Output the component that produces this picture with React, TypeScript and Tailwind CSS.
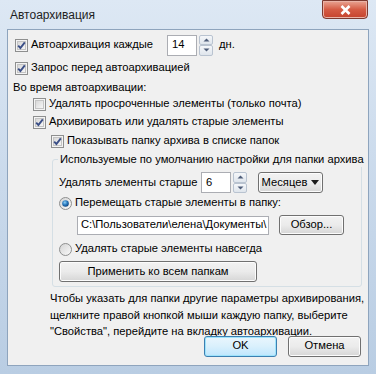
import React from "react";

const Check = ({ checked }: { checked: boolean }) => (
  <svg width="13" height="13" viewBox="0 0 13 13" className="shrink-0">
    <defs>
      <linearGradient id="cbg" x1="0" y1="0" x2="1" y2="1">
        <stop offset="0" stopColor="#d6d6d6" />
        <stop offset="1" stopColor="#f8f8f8" />
      </linearGradient>
    </defs>
    <rect x="0.5" y="0.5" width="12" height="12" fill="#f4f4f4" stroke="#8e8f8f" />
    <rect x="2.5" y="2.5" width="8" height="8" fill="url(#cbg)" stroke="#c4c4c4" />
    {checked && (
      <path d="M3.2 6.6 L5.4 9 L9.8 3.3" fill="none" stroke="#3b4f87" strokeWidth="1.9" />
    )}
  </svg>
);

const Radio = ({ checked }: { checked: boolean }) => (
  <svg width="13" height="13" viewBox="0 0 13 13" className="shrink-0">
    <defs>
      <linearGradient id="rbg" x1="0" y1="0" x2="1" y2="1">
        <stop offset="0" stopColor="#d2d2d2" />
        <stop offset="1" stopColor="#fbfbfb" />
      </linearGradient>
      <radialGradient id="rdot" cx="0.4" cy="0.35" r="0.7">
        <stop offset="0" stopColor="#8fd0f5" />
        <stop offset="0.5" stopColor="#2a7bc0" />
        <stop offset="1" stopColor="#0d3f78" />
      </radialGradient>
    </defs>
    <circle cx="6.5" cy="6.5" r="6" fill="url(#rbg)" stroke="#8e8f8f" />
    {checked && <circle cx="6.5" cy="6.5" r="3.3" fill="url(#rdot)" />}
  </svg>
);

const Spin = () => (
  <div className="flex flex-col w-[14px] h-[21px] ml-[2px]">
    {[0, 1].map((i) => (
      <div
        key={i}
        className="flex-1 flex items-center justify-center border border-[#b9c3d0] rounded-[2px] bg-gradient-to-b from-[#f5f7fa] to-[#dfe5ec]"
      >
        <svg width="7" height="4" viewBox="0 0 7 4">
          {i === 0 ? (
            <path d="M0.5 3.5 L3.5 0.5 L6.5 3.5 Z" fill="#4e5d79" />
          ) : (
            <path d="M0.5 0.5 L3.5 3.5 L6.5 0.5 Z" fill="#4e5d79" />
          )}
        </svg>
      </div>
    ))}
  </div>
);

const Btn = ({ children, className = "" }: { children: React.ReactNode; className?: string }) => (
  <div
    className={
      "flex items-center justify-center border border-[#707070] rounded-[3px] bg-gradient-to-b from-[#f2f2f2] via-[#ebebeb] to-[#d6d6d6] shadow-[inset_0_0_0_1px_#fcfcfc] " +
      className
    }
  >
    {children}
  </div>
);

export default function App() {
  return (
    <div
      className="w-[376px] h-[374px] relative overflow-hidden bg-gradient-to-b from-[#dde8f4] via-[#c9d9eb] to-[#b9cde3] text-[11.2px] leading-none text-black whitespace-nowrap"
      style={{ fontFamily: '"Liberation Sans", Arial, sans-serif' }}
    >
      {/* Title bar */}
      <div className="h-[29px] flex items-center pl-[10px] text-[12px] text-[#1e1e1e]">Автоархивация</div>
      <div className="absolute top-0 right-[8px] w-[46px] h-[19px] rounded-b-[4px] border border-[#7d3a30] bg-gradient-to-b from-[#e8a493] via-[#d55b44] to-[#c5432d] flex items-center justify-center shadow-[inset_0_0_0_1px_#eab3a6]">
        <svg width="11" height="10" viewBox="0 0 11 10">
          <path d="M1.5 1 L9.5 9 M9.5 1 L1.5 9" stroke="#ffffff" strokeWidth="2.6" />
        </svg>
      </div>

      {/* Content */}
      <div className="absolute left-[7px] top-[29px] w-[362px] h-[337px] border border-[#8ea4bd] bg-[#f0f0f0]">
        <div className="pl-[7px] pt-[4px]">
          {/* Row 1 */}
          <div className="h-[22px] flex items-center">
            <Check checked />
            <span className="ml-[3px] w-[136px]">Автоархивация каждые</span>
            <div className="w-[30px] h-[21px] border border-[#abadb3] bg-white flex items-center pl-[4px]">14</div>
            <Spin />
            <span className="ml-[6px]">дн.</span>
          </div>
          <div className="h-[16px] mt-[4px] flex items-center">
            <Check checked />
            <span className="ml-[3px]">Запрос перед автоархивацией</span>
          </div>
          <div className="h-[16px] mt-[4px] flex items-center -ml-[2px]">Во время автоархивации:</div>
          <div className="h-[16px] flex items-center pl-[18px]">
            <Check checked={false} />
            <span className="ml-[3px]">Удалять просроченные элементы (только почта)</span>
          </div>
          <div className="h-[16px] mt-[2px] flex items-center pl-[18px]">
            <Check checked />
            <span className="ml-[3px]">Архивировать или удалять старые элементы</span>
          </div>
          <div className="h-[16px] mt-[3px] flex items-center pl-[36px]">
            <Check checked />
            <span className="ml-[3px]">Показывать папку архива в списке папок</span>
          </div>
        </div>

        {/* Group box */}
        <div className="relative ml-[44px] mt-[10px] w-[310px] h-[128px] border border-[#d5dfe5] rounded-[3px]">
          <div className="absolute -top-[7px] left-[5px] px-[2px] bg-[#f0f0f0] h-[14px] flex items-center">
            Используемые по умолчанию настройки для папки архива
          </div>
          <div className="pl-[6px] pt-[12px]">
            <div className="h-[21px] flex items-center">
              <span className="w-[142px]">Удалять элементы старше</span>
              <div className="w-[30px] h-[21px] border border-[#abadb3] bg-white flex items-center pl-[4px]">6</div>
              <Spin />
              <Btn className="ml-[11px] w-[65px] h-[21px]">
                <span>Месяцев</span>
                <svg width="8" height="5" viewBox="0 0 8 5" className="ml-[4px]">
                  <path d="M0 0 L8 0 L4 5 Z" fill="#1a1a1a" />
                </svg>
              </Btn>
            </div>
            <div className="h-[16px] mt-[2px] flex items-center">
              <Radio checked />
              <span className="ml-[3px]">Перемещать старые элементы в папку:</span>
            </div>
            <div className="flex items-center mt-[4px] ml-[18px]">
              <div className="w-[192px] h-[19px] border border-[#abadb3] bg-white flex items-center pl-[3px] overflow-hidden">
                C:\Пользователи\елена\Документы\
              </div>
              <Btn className="ml-[10px] w-[65px] h-[20px]">Обзор...</Btn>
            </div>
            <div className="h-[16px] mt-[6px] flex items-center">
              <Radio checked={false} />
              <span className="ml-[3px]">Удалять старые элементы навсегда</span>
            </div>
            <Btn className="mt-[4px] w-[198px] h-[21px]">Применить ко всем папкам</Btn>
          </div>
        </div>

        {/* Paragraph */}
        <div className="ml-[42px] mt-[3px] leading-[16.5px]">
          Чтобы указать для папки другие параметры архивирования,
          <br />
          щелкните правой кнопкой мыши каждую папку, выберите
          <br />
          "Свойства", перейдите на вкладку автоархивации.
        </div>

        {/* Buttons */}
        <div className="flex justify-end pr-[7px] mt-[-4px] gap-[11px]">
          <div className="w-[73px] h-[21px] border border-[#3c7fb1] rounded-[3px] bg-gradient-to-b from-[#eaf6fd] via-[#d9f0fc] to-[#bee6fd] shadow-[inset_0_0_0_1px_#9ee3fb] flex items-center justify-center">
            OK
          </div>
          <Btn className="w-[73px] h-[21px]">Отмена</Btn>
        </div>
      </div>
    </div>
  );
}
